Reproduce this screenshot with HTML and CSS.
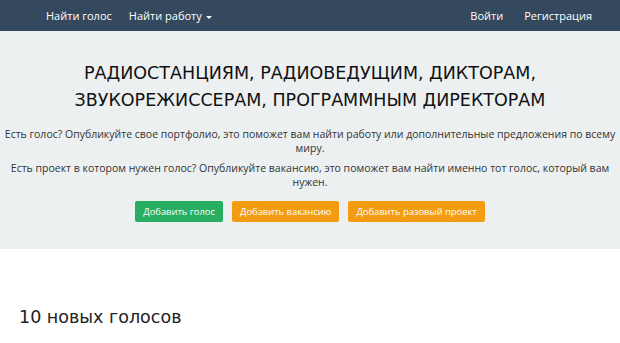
FILE: index.html
```html
<!DOCTYPE html>
<html lang="ru">
<head>
<meta charset="utf-8">
<link rel="stylesheet" href="styles.css">
</head>
<body>
<nav class="navbar">
  <div class="nav-left">
    <a class="nav-link">Найти голос</a>
    <a class="nav-link">Найти работу <span class="caret"></span></a>
  </div>
  <div class="nav-right">
    <a class="nav-link">Войти</a>
    <a class="nav-link">Регистрация</a>
  </div>
</nav>
<section class="jumbotron">
  <h1 class="title">РАДИОСТАНЦИЯМ, РАДИОВЕДУЩИМ, ДИКТОРАМ,<br>ЗВУКОРЕЖИССЕРАМ, ПРОГРАММНЫМ ДИРЕКТОРАМ</h1>
  <p class="lead">Есть голос? Опубликуйте свое портфолио, это поможет вам найти работу или дополнительные предложения по всему миру.</p>
  <p class="lead">Есть проект в котором нужен голос? Опубликуйте вакансию, это поможет вам найти именно тот голос, который вам нужен.</p>
  <div class="actions">
    <a class="btn btn-green">Добавить голос</a>
    <a class="btn btn-orange">Добавить вакансию</a>
    <a class="btn btn-orange">Добавить разовый проект</a>
  </div>
</section>
<section class="content">
  <h2 class="section-title">10 новых голосов</h2>
</section>
</body>
</html>
```

FILE: styles.css
```css
* { box-sizing: border-box; }
html, body { margin: 0; padding: 0; background: #fff; }
body { font-family: "Open Sans", "Liberation Sans", sans-serif; color: #2c3e50; }
.navbar {
  height: 31px;
  background: #34495e;
  display: flex;
  justify-content: space-between;
  align-items: center;
  padding: 0 28px 0 46px;
}
.nav-left { display: flex; gap: 17px; align-items: center; }
.nav-right { display: flex; gap: 21px; align-items: center; }
.nav-link { color: #fff; font-size: 11px; text-decoration: none; }
.caret {
  display: inline-block;
  width: 0; height: 0;
  border-left: 3px solid transparent;
  border-right: 3px solid transparent;
  border-top: 3px solid #fff;
  vertical-align: middle;
  margin-left: 1px;
}
.jumbotron {
  background: #ecf0f1;
  height: 218px;
  padding-top: 29px;
  text-align: center;
}
.title {
  font-family: "DejaVu Sans", sans-serif;
  font-weight: normal;
  font-size: 17.5px;
  line-height: 27px;
  margin: 0 0 13px;
  color: #111;
}
.lead {
  font-size: 10.5px;
  line-height: 14px;
  margin: 0 0 6px;
  color: #333;
}
.actions {
  display: flex;
  justify-content: center;
  gap: 9px;
  margin-top: 12px;
}
.btn {
  display: inline-block;
  font-size: 9.4px;
  color: #fff;
  height: 21px;
  line-height: 21px;
  padding: 0 8px;
  border-radius: 2px;
}
.btn-green { background: #27ae60; }
.btn-orange { background: #f39c12; }
.content { padding: 58px 19px 0; }
.section-title {
  font-family: "DejaVu Sans", sans-serif;
  font-weight: normal;
  font-size: 17.5px;
  margin: 0;
  color: #222;
}
```
